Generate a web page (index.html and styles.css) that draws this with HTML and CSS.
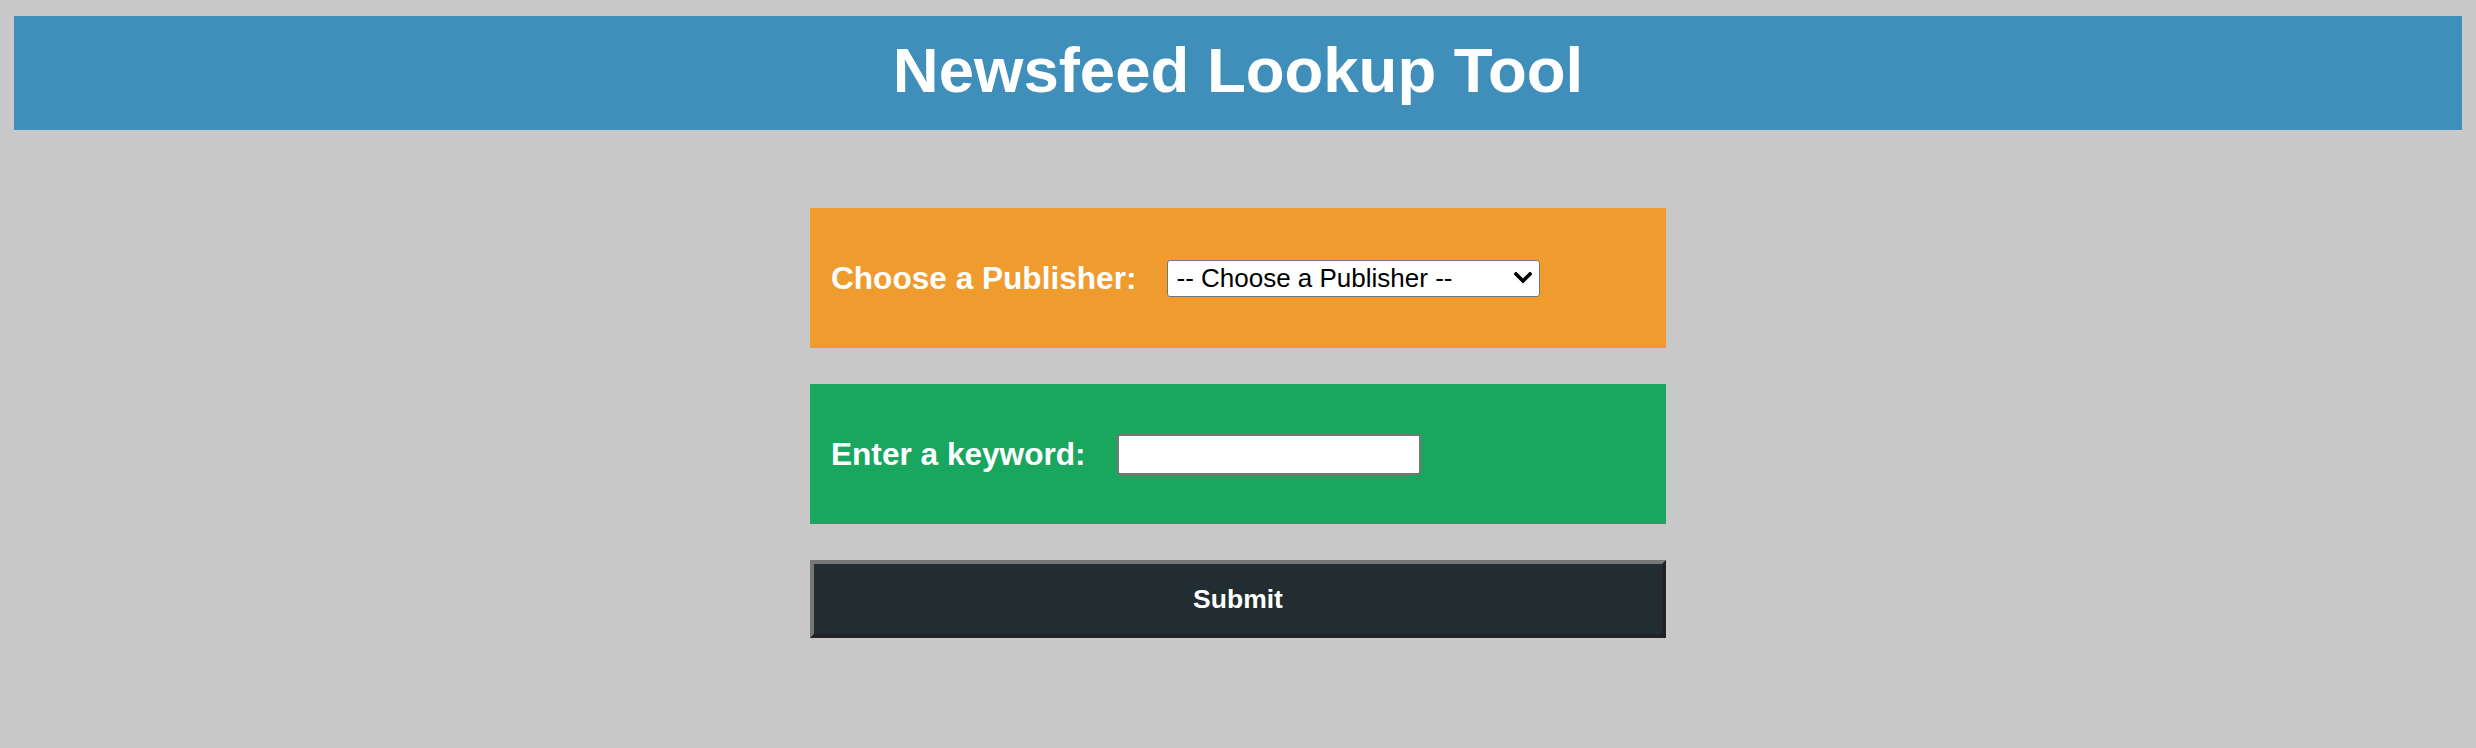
FILE: index.html
```html
<!DOCTYPE html>
<html lang="en">
<head>
<meta charset="utf-8">
<title>Newsfeed Lookup Tool</title>
<link rel="stylesheet" href="styles.css">
</head>
<body>
<header class="banner">
  <h1 class="banner-title">Newsfeed Lookup Tool</h1>
</header>
<form class="lookup">
  <div class="field field-publisher">
    <label class="field-label" for="publisher">Choose a Publisher:</label>
    <span class="select-wrap">
      <select class="publisher-select" id="publisher">
        <option>-- Choose a Publisher --</option>
      </select>
      <svg class="select-arrow" width="18" height="12" viewBox="0 0 18 12" aria-hidden="true">
        <path d="M2 2 L9 9 L16 2" fill="none" stroke="#000" stroke-width="3.6" stroke-linecap="square" stroke-linejoin="miter"/>
      </svg>
    </span>
  </div>
  <div class="field field-keyword">
    <label class="field-label" for="keyword">Enter a keyword:</label>
    <input class="keyword-input" id="keyword" type="text">
  </div>
  <button class="submit-btn" type="button">Submit</button>
</form>
</body>
</html>
```
FILE: styles.css
```css
html, body {
  margin: 0;
  background: #c8c8c8;
}
body {
  padding: 16px 14px;
  font-family: "Liberation Sans", Arial, sans-serif;
}
.banner {
  background: #408fbb;
  height: 114px;
  display: flex;
  align-items: center;
  justify-content: center;
}
.banner-title {
  margin: 0;
  color: #ffffff;
  font-size: 63.5px;
  font-weight: bold;
  line-height: 1;
  padding-bottom: 4px;
}
.lookup {
  width: 856px;
  margin: 78px auto 0;
  display: flex;
  flex-direction: column;
  gap: 36px;
}
.field {
  height: 140px;
  display: flex;
  align-items: center;
  padding: 0 20px;
  box-sizing: border-box;
}
.field-publisher { background: #f09b2d; }
.field-keyword { background: #19a65f; }
.field-label {
  color: #ffffff;
  font-weight: bold;
  font-size: 31.6px;
  margin-right: 31px;
  margin-left: 1px;
}
.select-wrap {
  position: relative;
  display: inline-flex;
}
.publisher-select {
  -webkit-appearance: none;
  appearance: none;
  width: 373px;
  height: 37px;
  font-family: "Liberation Sans", Arial, sans-serif;
  font-size: 26px;
  color: #000;
  background: #fff;
  border: 1px solid #767676;
  border-radius: 3px;
  padding: 0 8px;
  box-sizing: border-box;
}
.select-arrow {
  position: absolute;
  right: 8px;
  top: 12px;
  pointer-events: none;
}
.keyword-input {
  width: 304px;
  height: 41px;
  box-sizing: border-box;
  border: 2px solid #767676;
  border-radius: 3px;
  background: #fff;
  font-size: 26px;
  padding: 1px 4px;
}
.submit-btn {
  height: 78px;
  width: 100%;
  box-sizing: border-box;
  background: #222d32;
  color: #ffffff;
  font-family: "Liberation Sans", Arial, sans-serif;
  font-weight: bold;
  font-size: 26.5px;
  border-style: solid;
  border-width: 4px;
  border-color: #777777 #222222 #222222 #777777;
  padding: 0;
  cursor: pointer;
}
```
